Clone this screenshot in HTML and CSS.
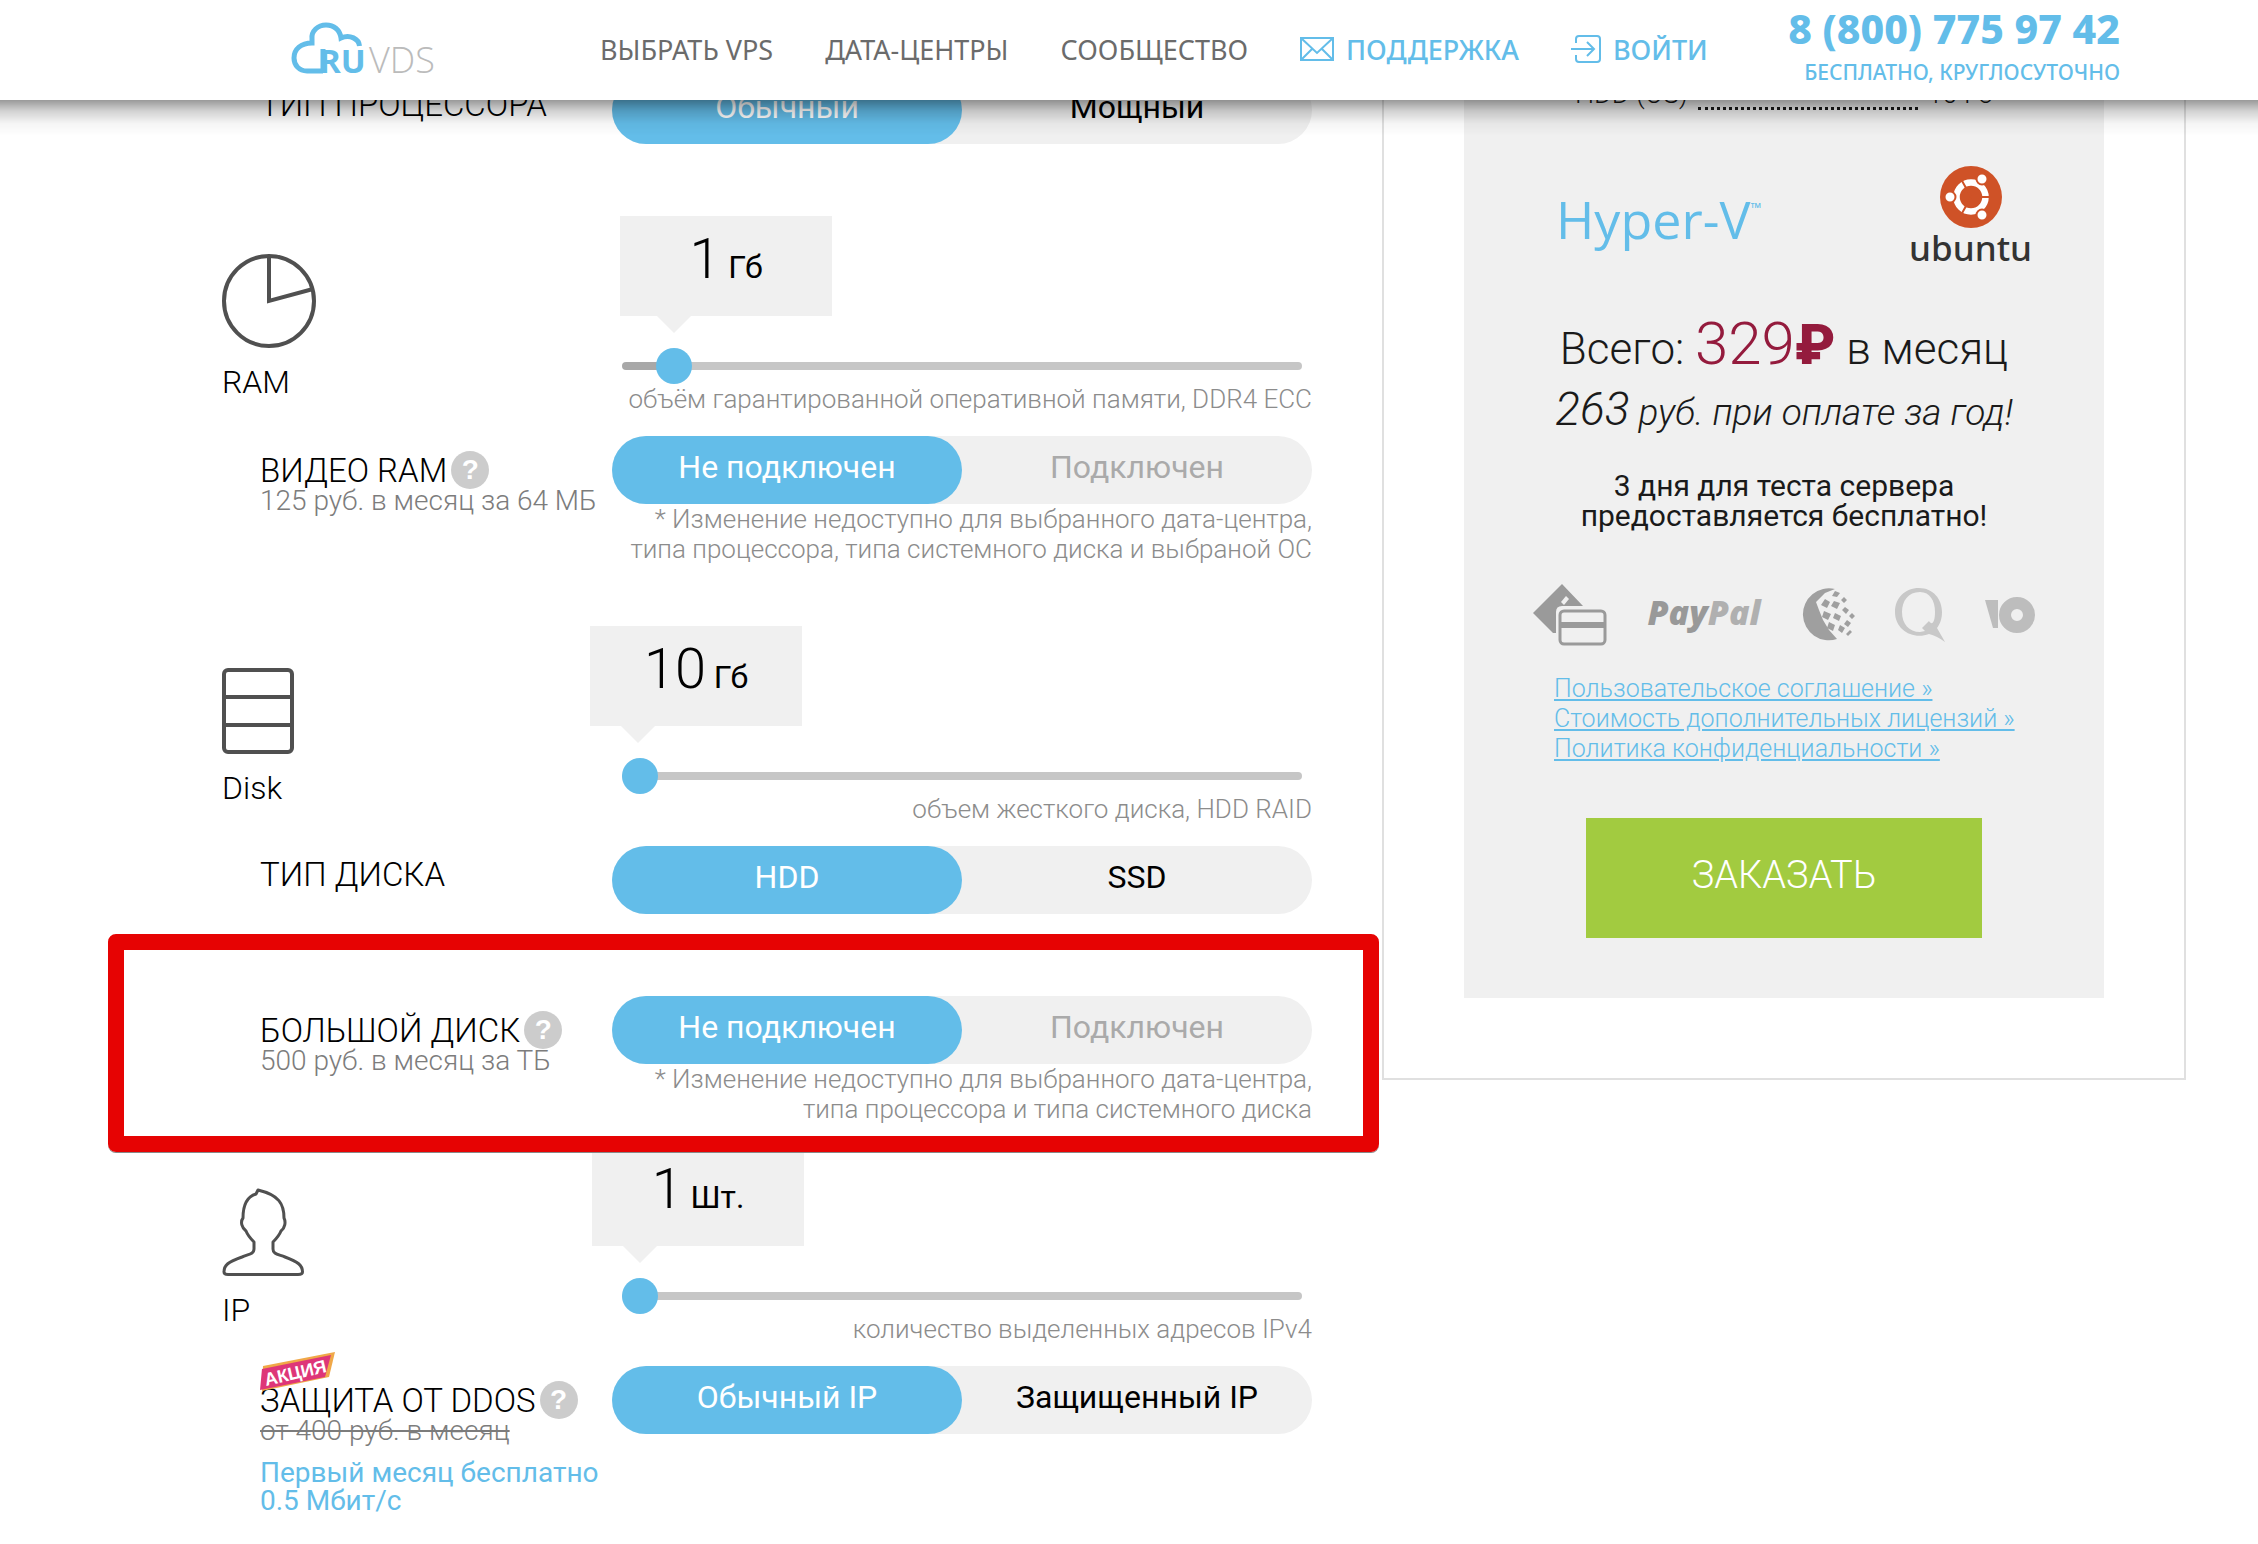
FILE: index.html
```html
<!DOCTYPE html>
<html lang="ru">
    <head>
        <meta charset="utf-8">
        <title>RUVDS</title>
        <link rel="stylesheet" href="styles.css">
    </head>
    <body>
        <header class="header">
            <a class="logo" href="#" aria-label="RUVDS">
                <svg width="150" height="56" viewBox="0 0 150 56">
                    <path d="M33 49H17C9 49 4 43 4 36C4 27 11 21 22 21V17C21 9 28 3 36 3C44 3 50 8 51 16C60 12 69 17 69.500 24M33 51V27" fill="none" stroke="#63bde9" stroke-width="5"/>
                    <text class="logo-ru" x="29" y="51">RU</text>
                    <text class="logo-vds" x="79" y="51">VDS</text>
                </svg>
            </a>
            <nav class="nav">
                <a href="#">ВЫБРАТЬ VPS</a>
                <a href="#">ДАТА-ЦЕНТРЫ</a>
                <a href="#">СООБЩЕСТВО</a>
                <a class="nav-blue" href="#">
                    <svg width="34" height="24" viewBox="0 0 34 24" fill="none" stroke="#63bde9" stroke-width="2">
                        <path d="M1 1H33V23H1ZM1 1L17 16L33 1M1 23L12 12M33 23L22 12"/>
                    </svg>
                    ПОДДЕРЖКА
                </a>
                <a class="nav-blue" href="#">
                    <svg width="30" height="28" viewBox="0 0 30 28" fill="none" stroke="#63bde9" stroke-width="2">
                        <path d="M5 8V4Q5 1 8 1H26Q29 1 29 4V24Q29 27 26 27H8Q5 27 5 24V20M0 14H22M16 7L23 14L16 21"/>
                    </svg>
                    ВОЙТИ
                </a>
            </nav>
            <div class="phone">
                <a class="phone-number" href="tel:88007759742">8 (800) 775 97 42</a>
                <span class="phone-note">БЕСПЛАТНО, КРУГЛОСУТОЧНО</span>
            </div>
        </header>

        <main class="page">
            <form class="config">
                <section class="resource">
                    <div class="option">
                        <div class="option-label option-label-single">
                            <span class="option-title" id="cpu-title">ТИП ПРОЦЕССОРА</span>
                        </div>
                        <div class="toggle" role="radiogroup" aria-labelledby="cpu-title">
                            <input type="radio" name="cpu" id="cpu-1" checked><label for="cpu-1">Обычный</label>
                            <input type="radio" name="cpu" id="cpu-2"><label for="cpu-2">Мощный</label>
                        </div>
                    </div>
                </section>

                <section class="resource resource-ram">
                    <div class="amount">
                        <label class="amount-label" for="ram">
                            <svg width="94" height="94" viewBox="0 0 94 94" fill="none" stroke="#505050" stroke-width="4">
                                <circle cx="47" cy="47" r="45"/>
                                <path d="M47 2V47L91 35"/>
                            </svg>
                            RAM
                        </label>
                        <div class="slider">
                            <output class="bubble" for="ram" style="--left: 8px; --arrow: 54px">1 <small>Гб</small></output>
                            <input type="range" id="ram" min="0" max="19" value="1">
                            <p class="hint">объём гарантированной оперативной памяти, DDR4 ECC</p>
                        </div>
                    </div>
                    <div class="option">
                        <div class="option-label">
                            <span class="option-title"><span id="video-title">ВИДЕО RAM</span><button type="button" class="help" aria-label="Справка">?</button></span>
                            <span class="price">125 руб. в месяц за 64 МБ</span>
                        </div>
                        <div>
                            <div class="toggle" role="radiogroup" aria-labelledby="video-title">
                                <input type="radio" name="video" id="video-1" checked><label for="video-1">Не подключен</label>
                                <input type="radio" name="video" id="video-2" disabled><label for="video-2">Подключен</label>
                            </div>
                            <p class="hint">* Изменение недоступно для выбранного дата-центра,<br>типа процессора, типа системного диска и выбраной ОС</p>
                        </div>
                    </div>
                </section>

                <section class="resource resource-disk">
                    <div class="amount">
                        <label class="amount-label" for="disk">
                            <svg width="72" height="86" viewBox="0 0 72 86" fill="none" stroke="#505050" stroke-width="4">
                                <rect x="2" y="2" width="68" height="82" rx="4"/>
                                <path d="M2 29H70M2 57H70"/>
                            </svg>
                            Disk
                        </label>
                        <div class="slider">
                            <output class="bubble" for="disk" style="--left: -22px; --arrow: 48px">10 <small>Гб</small></output>
                            <input type="range" id="disk" min="10" max="1000" value="10">
                            <p class="hint">объем жесткого диска, HDD RAID</p>
                        </div>
                    </div>
                    <div class="option">
                        <div class="option-label option-label-single">
                            <span class="option-title" id="type-title">ТИП ДИСКА</span>
                        </div>
                        <div class="toggle" role="radiogroup" aria-labelledby="type-title">
                            <input type="radio" name="type" id="type-1" checked><label for="type-1">HDD</label>
                            <input type="radio" name="type" id="type-2"><label for="type-2">SSD</label>
                        </div>
                    </div>
                    <div class="option option-marked">
                        <div class="option-label">
                            <span class="option-title"><span id="big-title">БОЛЬШОЙ ДИСК</span><button type="button" class="help" aria-label="Справка">?</button></span>
                            <span class="price">500 руб. в месяц за ТБ</span>
                        </div>
                        <div>
                            <div class="toggle" role="radiogroup" aria-labelledby="big-title">
                                <input type="radio" name="big" id="big-1" checked><label for="big-1">Не подключен</label>
                                <input type="radio" name="big" id="big-2" disabled><label for="big-2">Подключен</label>
                            </div>
                            <p class="hint">* Изменение недоступно для выбранного дата-центра,<br>типа процессора и типа системного диска</p>
                        </div>
                    </div>
                </section>

                <section class="resource resource-ip">
                    <div class="amount">
                        <label class="amount-label" for="ip">
                            <svg width="82" height="88" viewBox="0 0 82 88" fill="none" stroke="#505050" stroke-width="3" stroke-linejoin="round">
                                <path d="M36 2L34 6C24 9 21 18 21 30C18 34 20 40 24 43C26 48 29 51 32 54V61C32 66 27 66 20 69C6 74 2 77 2 84Q2 86.500 6 86.500H76Q80.500 86.500 80.500 84C80.500 77 76 74 63 69C55 66 51 66 51 61V54C54 51 57 48 59 43C63 40 64 34 62 30C62 16 57 7 36 2Z"/>
                            </svg>
                            IP
                        </label>
                        <div class="slider">
                            <output class="bubble" for="ip" style="--left: -20px; --arrow: 48px">1 <small>Шт.</small></output>
                            <input type="range" id="ip" min="1" max="20" value="1">
                            <p class="hint">количество выделенных адресов IPv4</p>
                        </div>
                    </div>
                    <div class="option">
                        <div class="option-label">
                            <svg class="promo" width="76" height="40" viewBox="0 0 76 40">
                                <path d="M3 14L75 0L69 25L2 39Z" fill="#f0a848"/>
                                <path d="M2 17L71 3L65 25L0 38Z" fill="#de3678"/>
                                <text x="6" y="34" transform="rotate(-13 6 34)">АКЦИЯ</text>
                            </svg>
                            <span class="option-title"><span id="ddos-title">ЗАЩИТА ОТ DDOS</span><button type="button" class="help" aria-label="Справка">?</button></span>
                            <s class="price">от 400 руб. в месяц</s>
                            <p class="free">Первый месяц бесплатно<br>0.5 Мбит/с</p>
                        </div>
                        <div class="toggle" role="radiogroup" aria-labelledby="ddos-title">
                            <input type="radio" name="ddos" id="ddos-1" checked><label for="ddos-1">Обычный IP</label>
                            <input type="radio" name="ddos" id="ddos-2"><label for="ddos-2">Защищенный IP</label>
                        </div>
                    </div>
                </section>
            </form>

            <aside class="order">
                <div class="summary">
                    <div class="spec"><span>HDD (OS)</span><i></i><span>10 Гб</span></div>
                    <div class="platform">
                        <span class="hyperv">Hyper-V<sup>™</sup></span>
                        <div class="ubuntu">
                            <svg width="62" height="62" viewBox="0 0 62 62">
                                <circle cx="31" cy="31" r="31" fill="#cf5227"/>
                                <circle cx="31" cy="31" r="14.500" fill="none" stroke="#fff" stroke-width="6.500"/>
                                <path d="M31 31H52M31 31L21 13M31 31L21 49" stroke="#cf5227" stroke-width="2"/>
                                <g fill="#fff" stroke="#cf5227" stroke-width="2">
                                    <circle cx="10" cy="31" r="5.500"/>
                                    <circle cx="42" cy="13" r="5.500"/>
                                    <circle cx="42" cy="49" r="5.500"/>
                                </g>
                            </svg>
                            ubuntu
                        </div>
                    </div>
                    <p class="total">Всего: <span class="sum">329<b>₽</b></span> в месяц</p>
                    <p class="year"><span>263</span> руб. при оплате за год!</p>
                    <p class="trial">3 дня для теста сервера<br>предоставляется бесплатно!</p>
                    <div class="payments">
                        <svg width="74" height="62" viewBox="0 0 74 62">
                            <path d="M0 29L29 0L50 22H29Q23 22 23 28V49H20Z" fill="#9a9a9a"/>
                            <path d="M28 18L33 12L36 15L31 21Z" fill="#f0f0f0"/>
                            <rect x="27" y="27" width="45" height="33" rx="4" fill="none" stroke="#9a9a9a" stroke-width="3"/>
                            <path d="M27 41H72" stroke="#9a9a9a" stroke-width="6"/>
                        </svg>
                        <span class="paypal">Pay<span>Pal</span></span>
                        <svg width="54" height="54" viewBox="0 0 54 54">
                            <path d="M34 1A26 26 0 1 0 36 51L28 42L22 32L18 22L15 14L24 5Z" fill="#9f9f9f"/>
                            <g fill="#9f9f9f">
                                <path d="M24 11L29 14L26 20L20 17ZM34 3L39 5L36 9L31 8ZM23 23L30 26L27 32L21 29ZM33 13L39 15L36 21L30 18ZM28 34L34 37L32 43L26 40ZM34 25L40 28L38 33L32 30ZM43 9L46 12L43 15L40 12ZM44 19L48 22L45 26L41 22ZM51 25L54 28L51 31L48 28ZM39 37L44 40L41 45L37 42ZM46 32L50 35L47 39L43 36ZM49 42L51 44L47 48L45 46Z"/>
                            </g>
                        </svg>
                        <svg width="50" height="54" viewBox="0 0 50 54">
                            <path fill-rule="evenodd" d="M24 0C38 0 47 11 47 24C47 31 45 36 42 40L50 54Q42 48 34 46C18 52 0 42 0 24C0 10 10 0 24 0ZM25 4C13 4 7 13 7 24C7 36 14 44 25 44L30 43L27 40L34 33C37 38 40 34 40 24C40 13 35 4 25 4Z" fill="#c8c8c8"/>
                        </svg>
                        <svg width="50" height="38" viewBox="0 0 50 38">
                            <path d="M0 4H13V32H8Z" fill="#bdbdbd"/>
                            <circle cx="32" cy="19" r="12" fill="none" stroke="#bdbdbd" stroke-width="12"/>
                        </svg>
                    </div>
                    <div class="docs">
                        <a href="#">Пользовательское соглашение »</a>
                        <a href="#">Стоимость дополнительных лицензий »</a>
                        <a href="#">Политика конфиденциальности »</a>
                    </div>
                    <button type="button" class="buy">ЗАКАЗАТЬ</button>
                </div>
            </aside>
        </main>
    </body>
</html>
```
FILE: styles.css
```css
* {
    box-sizing: border-box;
}

body {
    margin: 0;
    overflow: hidden;
    background: #fff;
    color: #000;
    font-family: Roboto, "Liberation Sans", sans-serif;
    font-weight: 300;
    font-size: 32px;
}

p {
    margin: 0;
}

/* header */

.header {
    position: fixed;
    top: 0;
    left: 0;
    right: 0;
    z-index: 10;
    display: flex;
    align-items: center;
    height: 100px;
    padding: 0 138px 0 290px;
    background: #fff;
    font-family: "Noto Sans", "Open Sans", sans-serif;
}

.header::after {
    content: "";
    position: absolute;
    top: 100%;
    left: 0;
    right: 0;
    height: 36px;
    background: linear-gradient(rgba(0, 0, 0, 0.4), rgba(0, 0, 0, 0.18) 30%, rgba(0, 0, 0, 0.04) 65%, transparent);
    pointer-events: none;
}

.logo svg {
    display: block;
    overflow: visible;
}

.logo-ru {
    font: bold 33px "Open Sans", sans-serif;
    fill: #63bde9;
}

.logo-vds {
    font: 300 36px "Open Sans", sans-serif;
    fill: #bbb;
}

.nav {
    display: flex;
    gap: 52px;
    margin-left: 160px;
    padding-bottom: 2px;
    font-size: 27px;
    font-weight: 400;
}

.nav a {
    display: flex;
    align-items: center;
    gap: 12px;
    color: #6b6b6b;
    text-decoration: none;
    white-space: nowrap;
}

.nav .nav-blue {
    color: #63bde9;
    font-weight: 500;
}

.phone {
    display: flex;
    flex-direction: column;
    align-items: flex-end;
    margin-left: auto;
    padding-bottom: 12px;
    color: #63bde9;
    white-space: nowrap;
}

.phone-number {
    color: #63bde9;
    font-size: 41px;
    font-weight: 800;
    line-height: 56px;
    text-decoration: none;
}

.phone-note {
    font-size: 21px;
    font-weight: 500;
    line-height: 32px;
}

/* configurator */

.page {
    display: grid;
    grid-template-columns: 1090fr 804fr;
    gap: 70px;
    align-items: start;
    padding: 0 72px 0 222px;
}

.config {
    padding-top: 76px;
}

.resource-ram {
    margin-top: 72px;
}

.resource-disk {
    margin-top: 62px;
}

.resource-ip {
    margin-top: 22px;
}

.amount,
.option {
    display: grid;
    grid-template-columns: 390fr 700fr;
}

.amount {
    margin-bottom: 22px;
}

.amount-label {
    display: flex;
    flex-direction: column;
    gap: 16px;
    padding-top: 42px;
    line-height: 36px;
}

.resource-ram .amount-label {
    padding-top: 38px;
}

.bubble {
    position: relative;
    display: block;
    width: 212px;
    height: 100px;
    margin-left: var(--left);
    background: #f0f0f0;
    font-size: 56px;
    font-weight: 300;
    line-height: 86px;
    text-align: center;
}

.bubble small {
    margin-left: -6px;
    font-size: 32px;
    font-weight: 400;
}

.bubble::after {
    content: "";
    position: absolute;
    top: 100%;
    left: var(--arrow);
    margin-left: -17px;
    border: 17px solid transparent;
    border-top-color: #f0f0f0;
    border-bottom: 0;
}

.slider input {
    display: block;
    width: calc(100% - 20px);
    height: 36px;
    margin: 32px 10px 0;
    background: none;
    appearance: none;
}

.slider input::-webkit-slider-runnable-track {
    height: 8px;
    border-radius: 4px;
    background: #c6c6c6;
}

#ram::-webkit-slider-runnable-track {
    background: linear-gradient(90deg, #a8a8a8 40px, #c6c6c6 40px);
}

.slider input::-webkit-slider-thumb {
    width: 36px;
    height: 36px;
    margin-top: -14px;
    border-radius: 50%;
    background: #63bde9;
    appearance: none;
}

.hint {
    color: #8c8c8c;
    font-size: 26px;
    line-height: 30px;
    text-align: right;
    white-space: nowrap;
}

.option-label {
    position: relative;
    padding: 18px 0 0 38px;
}

.option-label-single {
    padding-top: 12px;
}

.option-title {
    display: flex;
    align-items: center;
    gap: 4px;
    height: 32px;
    font-size: 33px;
    white-space: nowrap;
}

.help {
    width: 38px;
    height: 38px;
    padding: 0;
    border: 0;
    border-radius: 50%;
    background: #ccc;
    color: #fff;
    font: bold 28px/38px "Liberation Sans", sans-serif;
}

.price {
    display: block;
    color: #7c7c7c;
    font-size: 28px;
    line-height: 30px;
    white-space: nowrap;
}

.free {
    margin-top: 13px;
    color: #63bde9;
    font-size: 28px;
    font-weight: 400;
    line-height: 28px;
    white-space: nowrap;
}

.promo {
    position: absolute;
    top: -14px;
    left: 38px;
}

.promo text {
    font: bold 18px "Liberation Sans", sans-serif;
    fill: #fff;
}

.toggle {
    position: relative;
    display: flex;
    height: 68px;
    border-radius: 34px;
    background: #f0f0f0;
    font-weight: 400;
}

.toggle input {
    position: absolute;
    opacity: 0;
}

.toggle label {
    flex: 1;
    border-radius: 34px;
    line-height: 62px;
    text-align: center;
}

.toggle input:checked + label {
    background: #63bde9;
    color: #fff;
}

.toggle input:disabled + label {
    color: #aaa;
}

.option-marked {
    position: relative;
    margin-top: 82px;
}

/* red frame over the row */
.option-marked::after {
    content: "";
    position: absolute;
    z-index: 2;
    top: -62px;
    right: -67px;
    bottom: -28px;
    left: -114px;
    border: 16px solid #e60303;
    border-radius: 8px;
    box-shadow: 0 1px 0 #888;
    pointer-events: none;
}

/* order */

.order {
    padding: 0 80px 80px;
    border: 2px solid #e0e0e0;
    border-top: 0;
}

.summary {
    display: flex;
    flex-direction: column;
    align-items: center;
    padding: 78px 0 60px;
    background: #f0f0f0;
    color: #1a1a1a;
}

.spec {
    display: flex;
    align-items: flex-end;
    gap: 10px;
    width: 418px;
    font-size: 27px;
    line-height: 32px;
}

.spec i {
    flex: 1;
    border-bottom: 3px dotted #1a1a1a;
}

.platform {
    display: flex;
    justify-content: space-between;
    width: 496px;
    margin-top: 56px;
    padding-left: 20px;
}

.hyperv {
    margin-top: 18px;
    color: #63bde9;
    font: 400 52px/70px "Open Sans", sans-serif;
}

.hyperv sup {
    font-size: 14px;
    line-height: 14px;
    vertical-align: 26px;
}

.ubuntu {
    display: flex;
    flex-direction: column;
    align-items: center;
    color: #333;
    font: 500 35px/40px "Noto Sans", sans-serif;
}

.total {
    margin-top: 41px;
    font-size: 44px;
    line-height: 70px;
}

.sum {
    color: #941b3d;
    font-size: 60px;
}

.sum b {
    font-size: 56px;
    font-weight: 900;
}

.year {
    font-size: 37px;
    font-style: italic;
    line-height: 50px;
}

.year span {
    font-size: 46px;
}

.trial {
    margin-top: 33px;
    font-size: 30px;
    font-weight: 400;
    line-height: 30px;
    text-align: center;
}

.payments {
    display: flex;
    align-items: center;
    gap: 40px;
    height: 62px;
    margin-top: 53px;
}

.paypal {
    padding-bottom: 6px;
    color: #999;
    font: italic 800 34px/40px "Open Sans", sans-serif;
}

.paypal span {
    color: #b0b0b0;
}

.docs {
    display: flex;
    flex-direction: column;
    width: 460px;
    margin-top: 28px;
    font-size: 25px;
    line-height: 30px;
    white-space: nowrap;
}

.docs a {
    color: #63bde9;
}

.buy {
    width: 396px;
    height: 120px;
    margin-top: 54px;
    padding: 0 0 6px;
    border: 0;
    background: #a2cb40;
    color: #fff;
    font: inherit;
    font-size: 38px;
}
```
